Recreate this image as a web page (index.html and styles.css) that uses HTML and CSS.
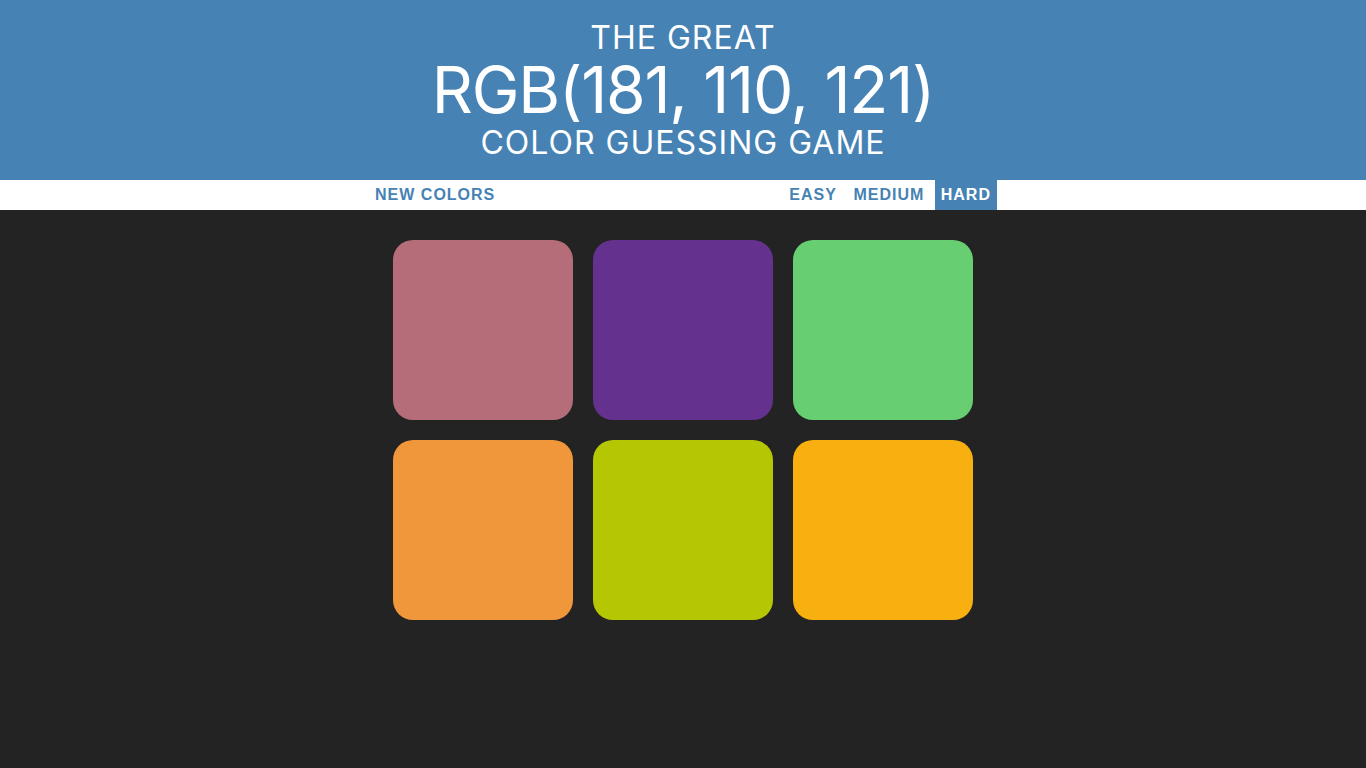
FILE: index.html
```html
<!DOCTYPE html>
<html lang="en">
<head>
<meta charset="utf-8">
<title>Color Game</title>
<link rel="stylesheet" href="styles.css">
</head>
<body>
<h1 class="title">
<span class="title-line">The Great</span>
<span class="title-rgb">RGB(181, 110, 121)</span>
<span class="title-line">Color Guessing Game</span>
</h1>
<div class="stripe"><button class="btn">New Colors</button> <span class="message"></span> <button class="btn">Easy</button> <button class="btn">Medium</button> <button class="btn selected">Hard</button></div>
<div class="board">
<div class="square sq-1"></div>
<div class="square sq-2"></div>
<div class="square sq-3"></div>
<div class="square sq-4"></div>
<div class="square sq-5"></div>
<div class="square sq-6"></div>
</div>
</body>
</html>
```

FILE: styles.css
```css
html, body {
  margin: 0;
  padding: 0;
}
body {
  background: #232323;
  font-family: Inter, "Open Sans", sans-serif;
}
.title {
  margin: 0;
  padding: 20px 0;
  height: 140px;
  background: #4682b4;
  color: #fff;
  text-align: center;
  text-transform: uppercase;
  font-weight: 400;
  font-size: 32px;
  line-height: 35px;
  display: flex;
  flex-direction: column;
  align-items: center;
}
.title-line {
  display: block;
  height: 35px;
  letter-spacing: 1px;
}
.title-rgb {
  display: block;
  height: 70px;
  font-size: 64px;
  line-height: 70px;
  letter-spacing: -1.2px;
  font-variant-numeric: proportional-nums;
}
.stripe {
  background: #fff;
  height: 30px;
  text-align: center;
  font-family: "Liberation Sans", Arial, sans-serif;
  font-size: 16px;
}
.btn {
  border: none;
  background: none;
  padding: 0 6px;
  margin: 0;
  height: 100%;
  font-family: "Liberation Sans", Arial, sans-serif;
  font-size: 16px;
  font-weight: 700;
  letter-spacing: 1px;
  text-transform: uppercase;
  color: #4682b4;
  vertical-align: top;
}
.btn.selected {
  background: #4682b4;
  color: #fff;
}
.message {
  display: inline-block;
  width: 20%;
}
.board {
  width: 580px;
  margin: 20px auto;
  padding: 10px;
  display: grid;
  grid-template-columns: repeat(3, 180px);
  gap: 20px;
}
.square {
  height: 180px;
  border-radius: 20px;
}
.sq-1 { background: rgb(181, 110, 121); }
.sq-2 { background: rgb(100, 49, 142); }
.sq-3 { background: rgb(103, 207, 114); }
.sq-4 { background: rgb(240, 150, 59); }
.sq-5 { background: rgb(181, 199, 3); }
.sq-6 { background: rgb(248, 175, 16); }
```
